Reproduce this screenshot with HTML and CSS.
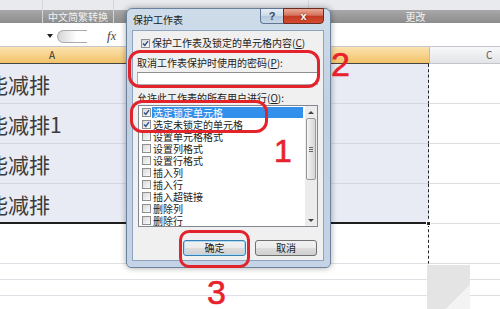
FILE: index.html
```html
<!DOCTYPE html>
<html lang="zh-CN">
<head>
    <meta charset="UTF-8">
    <title>保护工作表</title>
    <link rel="stylesheet" href="styles.css">
</head>
<body>
    <div class="ribbon">
        <div class="rgroup g1"><div class="rlabel"></div></div>
        <div class="rgroup g2"><div class="rlabel">中文简繁转换</div></div>
        <div class="rgroup g3"><div class="rlabel"></div></div>
        <div class="rgroup g4"><div class="rlabel">更改</div></div>
    </div>

    <div class="formula">
        <span class="name-arrow"></span>
        <span class="fbar-btn"></span>
        <span class="fx"><i>f</i>x</span>
    </div>

    <div class="sheet">
        <div class="col-head">
            <div class="head-a">A</div>
            <div class="head-c">C</div>
        </div>
        <div class="row sel"><div class="cell-a"><span class="val">能减排</span></div><div class="cell-c"></div></div>
        <div class="row sel"><div class="cell-a"><span class="val">能减排1</span></div><div class="cell-c"></div></div>
        <div class="row sel"><div class="cell-a"><span class="val">能减排</span></div><div class="cell-c"></div></div>
        <div class="row sel last"><div class="cell-a"><span class="val">能减排</span></div><div class="cell-c"></div></div>
        <div class="row"><div class="cell-a"></div><div class="cell-c"></div></div>
        <div class="row short"><div class="cell-a"></div><div class="cell-c"></div></div>
        <div class="row short"><div class="cell-a"></div><div class="cell-c"></div></div>
        <div class="row short"><div class="cell-a"></div><div class="cell-c"></div></div>
    </div>

    <!-- 填充柄 和 右下角水印 -->
    <div class="fill-handle"></div>
    <div class="watermark"></div>

    <div class="dialog">
        <div class="titlebar">
            <div class="title">保护工作表</div>
            <div class="tbtns">
                <span class="tb-help">?</span>
                <span class="tb-close">x</span>
            </div>
        </div>
        <div class="client">
            <div class="chk-row">
                <span class="cbox on"><svg width="7" height="7" viewBox="0 0 7 7"><path d="M1 3.6 L2.8 5.5 L6 1.2" fill="none" stroke="#2b4f8c" stroke-width="1.4"/></svg></span>
                <span>保护工作表及锁定的单元格内容(<u>C</u>)</span>
            </div>
            <div class="lbl pwd-lbl">取消工作表保护时使用的密码(<u>P</u>):</div>
            <div class="pwd"></div>
            <div class="lbl list-lbl">允许此工作表的所有用户进行(<u>O</u>):</div>
            <div class="list">
                <div class="items">
                    <div class="item hl"><span class="cbox on"><svg width="7" height="7" viewBox="0 0 7 7"><path d="M1 3.6 L2.8 5.5 L6 1.2" fill="none" stroke="#2b4f8c" stroke-width="1.4"/></svg></span><span class="item-text">选定锁定单元格</span></div>
                    <div class="item"><span class="cbox on"><svg width="7" height="7" viewBox="0 0 7 7"><path d="M1 3.6 L2.8 5.5 L6 1.2" fill="none" stroke="#2b4f8c" stroke-width="1.4"/></svg></span><span class="item-text">选定未锁定的单元格</span></div>
                    <div class="item"><span class="cbox"></span><span class="item-text">设置单元格格式</span></div>
                    <div class="item"><span class="cbox"></span><span class="item-text">设置列格式</span></div>
                    <div class="item"><span class="cbox"></span><span class="item-text">设置行格式</span></div>
                    <div class="item"><span class="cbox"></span><span class="item-text">插入列</span></div>
                    <div class="item"><span class="cbox"></span><span class="item-text">插入行</span></div>
                    <div class="item"><span class="cbox"></span><span class="item-text">插入超链接</span></div>
                    <div class="item"><span class="cbox"></span><span class="item-text">删除列</span></div>
                    <div class="item"><span class="cbox"></span><span class="item-text">删除行</span></div>
                </div>
                <div class="scroll">
                    <div class="sarrow up"></div>
                    <div class="thumb"><span class="grip"></span></div>
                    <div class="track"></div>
                    <div class="sarrow down"></div>
                </div>
            </div>
            <div class="btns">
                <div class="btn focus">确定</div>
                <div class="btn">取消</div>
            </div>
        </div>
    </div>

    <!-- 红色标注 -->
    <div class="mark m1"></div>
    <div class="mark m2"></div>
    <div class="mark m3"></div>
    <span class="num n1">1</span>
    <span class="num n2">2</span>
    <span class="num n3">3</span>
</body>
</html>
```

FILE: styles.css
```css
* {
    box-sizing: border-box;
}

body {
    margin: 0;
    width: 500px;
    height: 309px;
    overflow: hidden;
    position: relative;
    background: #fff;
    font-family: "Noto Sans CJK SC", "Noto Sans", sans-serif;
    color: #222;
}

/* 功能区底部的分组标题 */
.ribbon {
    display: flex;
    height: 23px;
    background: #e8eaee;
}

.rgroup {
    display: flex;
    flex-direction: column;
    justify-content: flex-end;
    border-right: 1px solid #d3d5d9;
}

.g1 { width: 43px; }
.g2 { width: 71px; }
.g3 { width: 195px; }
.g4 { flex: 1; border-right: none; }

.rlabel {
    height: 13px;
    background: linear-gradient(#a8a8a8, #8c8c8c);
    color: #f2f2f2;
    font-size: 10px;
    line-height: 13px;
    text-align: center;
}

.g4 .rlabel {
    padding-left: 22px;
}

/* 编辑栏 */
.formula {
    display: flex;
    align-items: center;
    height: 24px;
    padding-top: 3px;
    border-bottom: 1px solid #c4c7cc;
}

.name-arrow {
    margin-left: 47px;
    width: 0;
    height: 0;
    border-left: 3px solid transparent;
    border-right: 3px solid transparent;
    border-top: 4px solid #222;
}

.fbar-btn {
    margin-left: 4px;
    width: 30px;
    height: 13px;
    border: 1px solid #a9a9a9;
    border-right: none;
    border-radius: 7px 0 0 7px;
    background: linear-gradient(90deg, #d6d6d6, #fff 65%);
}

.fx {
    margin-left: 20px;
    font-family: "Liberation Serif", serif;
    font-style: italic;
    font-size: 12px;
    color: #444;
}

.fx i {
    font-size: 13px;
}

/* 表格 */
.col-head {
    display: flex;
    height: 17px;
    font-size: 10px;
    line-height: 16px;
}

.head-a {
    width: 429px;
    padding-left: 49px;
    background: linear-gradient(#fbe2b0, #f2c36a);
    border-bottom: 1px solid #444;
    color: #333;
}

.head-c {
    flex: 1;
    padding-left: 56px;
    background: linear-gradient(#f7f8f9, #e2e4e7);
    border-left: 1px solid #b9bcc1;
    border-bottom: 1px solid #c2c5ca;
    color: #555;
}

.row {
    display: flex;
    height: 40px;
}

.row.short {
    height: 16px;
}

.cell-a {
    width: 429px;
    overflow: hidden;
    white-space: nowrap;
    border-right: 1px dashed #222;
    border-bottom: 1px solid #dfe1e6;
    font-size: 21px;
    line-height: 40px;
    color: #3a3a3a;
}

.short .cell-a {
    border-right: 1px solid #e8e8e8;
}

.cell-c {
    flex: 1;
    border-bottom: 1px solid #dcdee1;
}

.sel .cell-a {
    background: #e8eaf4;
    border-bottom-color: #d3d7e4;
}

.row.last .cell-a {
    border-bottom: 2px solid #1e1e1e;
}

.val {
    display: inline-block;
    margin-left: -13px;
}

.fill-handle {
    position: absolute;
    left: 426px;
    top: 221px;
    width: 5px;
    height: 5px;
    background: #222;
    border: 1px solid #fff;
}

.watermark {
    position: absolute;
    left: 427px;
    top: 265px;
    width: 43px;
    height: 44px;
    background: linear-gradient(135deg, #e4e4e4 72%, #f3f3f3 72%);
}

/* 保护工作表 对话框 */
.dialog {
    position: absolute;
    left: 126px;
    top: 8px;
    width: 205px;
    height: 260px;
    display: flex;
    flex-direction: column;
    padding: 0 6px 6px 5px;
    background: linear-gradient(#cfdcea, #bfd0e3 40%, #c4d4e6);
    border: 1px solid #6c819b;
    border-radius: 6px 6px 5px 5px;
    box-shadow: 0 0 6px rgba(0, 0, 0, 0.35);
}

.titlebar {
    display: flex;
    height: 21px;
}

.title {
    flex: 1;
    padding-left: 1px;
    font-size: 10px;
    line-height: 21px;
    color: #1a1a1a;
}

.tbtns {
    display: flex;
    margin-top: -1px;
    height: 16px;
}

.tb-help,
.tb-close {
    font-family: "Liberation Sans", sans-serif;
    font-weight: bold;
    font-size: 11px;
    line-height: 14px;
    text-align: center;
    border: 1px solid #5f7590;
}

.tb-help {
    width: 23px;
    color: #3a4a5e;
    border-right: none;
    border-radius: 0 0 0 4px;
    background: linear-gradient(#e6eef7, #cbd9e8 50%, #b5c7db 50%, #c9d8e8);
}

.tb-close {
    width: 41px;
    color: #fff;
    border-color: #6a2b20;
    border-radius: 0 0 4px 0;
    background: linear-gradient(#eaa894, #d6735c 45%, #c23b22 50%, #d44a2e);
    text-shadow: 0 0 2px #6a1a0c;
}

.client {
    flex: 1;
    display: flex;
    flex-direction: column;
    padding: 6px 5px 0 4px;
    background: #f0f0f0;
    border: 1px solid #8ea3bd;
    font-size: 10px;
}

.chk-row {
    display: flex;
    align-items: center;
    height: 12px;
    margin-left: 4px;
    line-height: 12px;
}

.cbox {
    flex: none;
    display: flex;
    align-items: center;
    justify-content: center;
    width: 9px;
    height: 9px;
    margin-right: 2px;
    border: 1px solid #8f8f8f;
    background: linear-gradient(135deg, #d9d9d9, #fafafa);
}

.lbl {
    height: 12px;
    line-height: 12px;
}

.pwd-lbl { margin-top: 8px; }
.list-lbl { margin-top: 7px; }

.pwd {
    height: 13px;
    margin-top: 3px;
    background: #fff;
    border: 1px solid #abadb3;
    border-top-color: #8e8f8f;
}

.list {
    display: flex;
    height: 122px;
    margin-top: 1px;
    margin-left: 1px;
    background: #fff;
    border: 1px solid #828790;
}

.items {
    flex: 1;
}

.item {
    display: flex;
    align-items: center;
    height: 12px;
    padding-left: 3px;
}

.item .cbox {
    margin-right: 1px;
}

.item-text {
    flex: 1;
    margin-right: 2px;
    padding-left: 1px;
    line-height: 11px;
    white-space: nowrap;
}

.item.hl .item-text {
    background: #3390ea;
    color: #fff;
}

.scroll {
    display: flex;
    flex-direction: column;
    width: 12px;
    background: #ececec;
}

.sarrow {
    height: 12px;
    display: flex;
    align-items: center;
    justify-content: center;
}

.sarrow::after {
    content: "";
    border-left: 3px solid transparent;
    border-right: 3px solid transparent;
}

.sarrow.up::after { border-bottom: 3px solid #444; }
.sarrow.down::after { border-top: 3px solid #444; }

.thumb {
    height: 62px;
    margin: 0 1px;
    display: flex;
    align-items: center;
    justify-content: center;
    border: 1px solid #989898;
    border-radius: 2px;
    background: linear-gradient(90deg, #f4f4f4, #e4e4e4 50%, #d6d6d6);
}

.grip {
    width: 4px;
    height: 5px;
    border-top: 1px solid #666;
    border-bottom: 1px solid #666;
    background: linear-gradient(#666, #666) center / 4px 1px no-repeat;
}

.track {
    flex: 1;
}

.btns {
    display: flex;
    justify-content: flex-end;
    gap: 9px;
    margin-top: 13px;
    margin-right: 1px;
}

.btn {
    width: 62px;
    height: 16px;
    line-height: 14px;
    text-align: center;
    border: 1px solid #707070;
    border-radius: 3px;
    background: linear-gradient(#f2f2f2, #ebebeb 50%, #dddddd 50%, #cfcfcf);
}

.btn.focus {
    width: 63px;
    border-color: #3c7fb1;
    box-shadow: inset 0 0 0 1px #a9dbf6;
}

/* 红色标注 */
.mark {
    position: absolute;
    border: 3px solid #e3232c;
    border-radius: 12px;
}

.m1 { left: 128px; top: 50px; width: 192px; height: 38px; }
.m2 { left: 130px; top: 100px; width: 138px; height: 33px; }
.m3 { left: 179px; top: 230px; width: 71px; height: 38px; border-radius: 10px; }

.num {
    position: absolute;
    font-family: "Liberation Sans", sans-serif;
    line-height: 1;
    color: #e8212b;
    -webkit-text-stroke: 0.6px #e8212b;
}

.n1 { left: 274px; top: 135px; font-size: 32px; }
.n2 { left: 331px; top: 47px; font-size: 34px; }
.n3 { left: 207px; top: 275px; font-size: 34px; }
```
